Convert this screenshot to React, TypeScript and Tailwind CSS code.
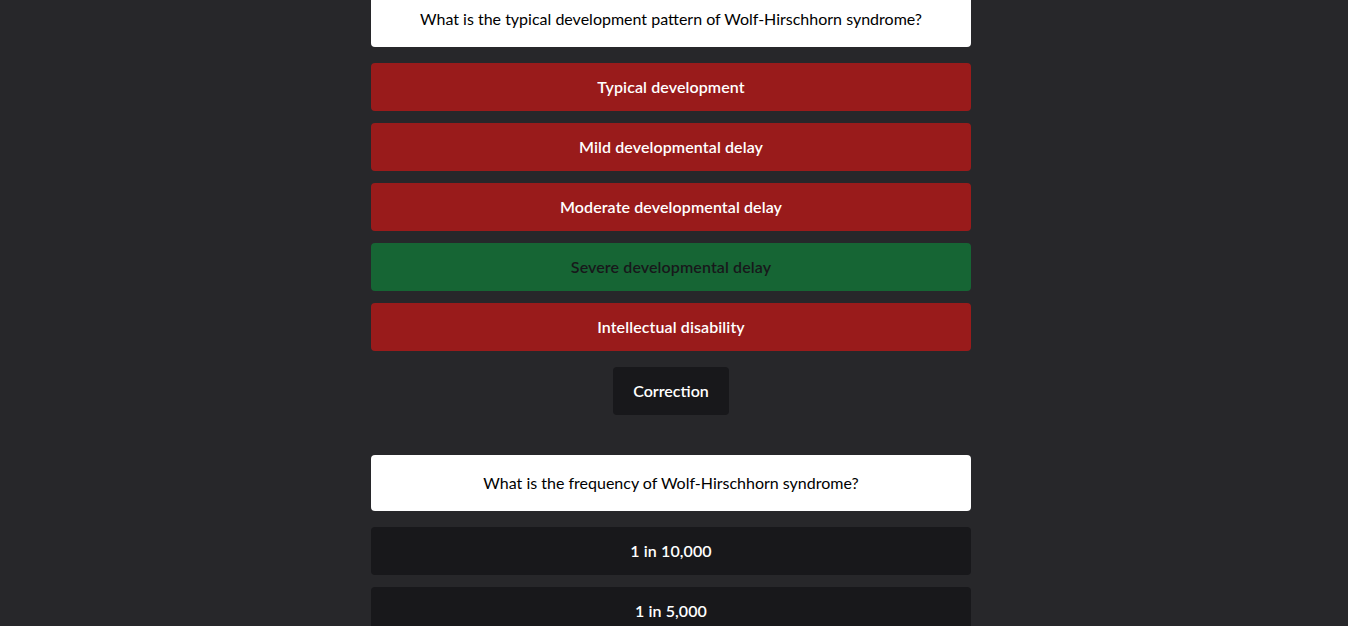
import React from "react";

type Answer = { label: string; state: "wrong" | "right" | "idle" };

const firstAnswers: Answer[] = [
  { label: "Typical development", state: "wrong" },
  { label: "Mild developmental delay", state: "wrong" },
  { label: "Moderate developmental delay", state: "wrong" },
  { label: "Severe developmental delay", state: "right" },
  { label: "Intellectual disability", state: "wrong" },
];

const secondAnswers: Answer[] = [
  { label: "1 in 10,000", state: "idle" },
  { label: "1 in 5,000", state: "idle" },
  { label: "1 in 50,000", state: "idle" },
];

function AnswerButton({ answer }: { answer: Answer }) {
  const tone =
    answer.state === "wrong"
      ? "bg-[#991b1b] text-white"
      : answer.state === "right"
      ? "bg-[#166534] text-[#18181b]"
      : "bg-[#18181b] text-white";
  return (
    <button className={`w-full py-3 rounded-[4px] text-[16px] leading-6 font-semibold tracking-[0.1px] ${tone}`}>
      {answer.label}
    </button>
  );
}

function Question({ text, answers, showCorrection }: { text: string; answers: Answer[]; showCorrection?: boolean }) {
  return (
    <div className="flex flex-col">
      <div className="bg-white text-black rounded-[4px] py-4 text-center text-[16px] leading-6">{text}</div>
      <div className="flex flex-col gap-3 mt-4">
        {answers.map((a) => (
          <AnswerButton key={a.label} answer={a} />
        ))}
      </div>
      {showCorrection && (
        <div className="flex justify-center mt-4">
          <button className="bg-[#18181b] text-white font-semibold text-[16px] leading-6 px-5 py-3 rounded-[4px]">
            Correction
          </button>
        </div>
      )}
    </div>
  );
}

export default function App() {
  return (
    <div
      className="min-h-screen bg-[#27272a] pr-[6px] overflow-hidden"
      style={{ fontFamily: "Lato, 'Noto Sans', sans-serif" }}
    >
      <div className="w-[600px] mx-auto -mt-[9px] flex flex-col gap-10">
        <Question
          text="What is the typical development pattern of Wolf-Hirschhorn syndrome?"
          answers={firstAnswers}
          showCorrection
        />
        <Question text="What is the frequency of Wolf-Hirschhorn syndrome?" answers={secondAnswers} />
      </div>
    </div>
  );
}
